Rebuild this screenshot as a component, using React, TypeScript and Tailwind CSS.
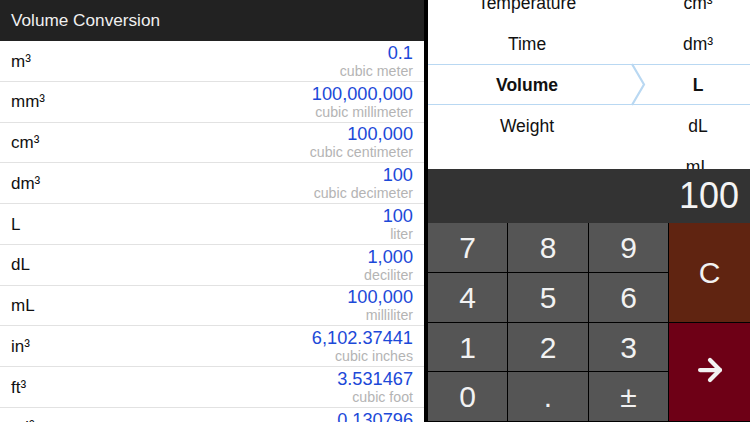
import { ArrowRight } from "lucide-react";

const rows = [
  { unit: "m³", value: "0.1", name: "cubic meter" },
  { unit: "mm³", value: "100,000,000", name: "cubic millimeter" },
  { unit: "cm³", value: "100,000", name: "cubic centimeter" },
  { unit: "dm³", value: "100", name: "cubic decimeter" },
  { unit: "L", value: "100", name: "liter" },
  { unit: "dL", value: "1,000", name: "deciliter" },
  { unit: "mL", value: "100,000", name: "milliliter" },
  { unit: "in³", value: "6,102.37441", name: "cubic inches" },
  { unit: "ft³", value: "3.531467", name: "cubic foot" },
  { unit: "yd³", value: "0.130796", name: "cubic yard" },
];

const categories = ["Temperature", "Time", "Volume", "Weight"];
const units = ["cm³", "dm³", "L", "dL", "mL"];
const keys = ["7", "8", "9", "4", "5", "6", "1", "2", "3", "0", ".", "±"];

export default function App() {
  return (
    <div className="flex h-[422px] w-[750px] overflow-hidden bg-black font-['Liberation_Sans',sans-serif]">
      {/* Conversion list */}
      <div className="w-[424px] shrink-0 bg-white">
        <div className="flex h-[41px] items-center bg-[#222222] pl-[11px] text-[17.2px] text-[#f0f0f0]">
          Volume Conversion
        </div>
        {rows.map((row) => (
          <div
            key={row.unit}
            className="flex h-[40.75px] items-center justify-between border-b border-[#e2e2e2] pl-[11px] pr-[11px]"
          >
            <span className="pt-px text-[17px] text-[#111111]">{row.unit}</span>
            <div className="flex flex-col items-end">
              <span className="text-[18.2px] leading-[21px] text-[#1c49d8]">{row.value}</span>
              <span className="text-[14.2px] leading-[15px] text-[#b4b4b4]">{row.name}</span>
            </div>
          </div>
        ))}
      </div>

      <div className="ml-1 flex flex-1 flex-col">
        {/* Picker */}
        <div className="relative flex h-[169px] overflow-hidden bg-white text-[17.5px] text-[#111111]">
          <div className="-mt-[17px] w-[198px] shrink-0">
            {categories.map((name) => (
              <div
                key={name}
                className={`flex h-[41px] items-center justify-center ${name === "Volume" ? "font-bold" : ""}`}
              >
                {name}
              </div>
            ))}
          </div>
          <div className="-mt-[17px] flex-1 pl-5">
            {units.map((name) => (
              <div
                key={name}
                className={`flex h-[41px] items-center justify-center ${name === "L" ? "font-bold" : ""}`}
              >
                {name}
              </div>
            ))}
          </div>
          {/* Selection band */}
          <svg className="absolute left-0 top-[63px] h-[43px] w-[322px]" viewBox="0 0 322 43" fill="none">
            <path d="M0 1.5H204M0 41.5H204M322 1.5H204M322 41.5H204" stroke="#b9d8f2" strokeWidth="1" />
            <path d="M204 1L216 21.5L204 42" stroke="#b9d8f2" strokeWidth="2.2" />
          </svg>
        </div>

        {/* Display */}
        <div className="flex h-[54px] items-center justify-end bg-[#333333] pr-[11px] text-[36px] text-[#f4f4f4]">
          100
        </div>

        {/* Keypad */}
        <div className="grid flex-1 grid-cols-[79px_80px_79px_1fr] grid-rows-[49px_49px_48px_49px] gap-px bg-black text-[#f2f2f2]">
          {keys.slice(0, 3).map((key) => (
            <div key={key} className="flex items-center justify-center bg-[#555555] text-[30px]">
              {key}
            </div>
          ))}
          <div className="row-span-2 flex items-center justify-center bg-[#602411] text-[30px]">C</div>
          {keys.slice(3, 6).map((key) => (
            <div key={key} className="flex items-center justify-center bg-[#555555] text-[30px]">
              {key}
            </div>
          ))}
          {keys.slice(6, 9).map((key) => (
            <div key={key} className="flex items-center justify-center bg-[#555555] text-[30px]">
              {key}
            </div>
          ))}
          <div className="row-span-2 flex items-center justify-center bg-[#6e0016] pb-1">
            <ArrowRight className="h-[34px] w-[34px]" strokeWidth={3} />
          </div>
          {keys.slice(9).map((key) => (
            <div key={key} className="flex items-center justify-center bg-[#555555] text-[30px]">
              {key}
            </div>
          ))}
        </div>
      </div>
    </div>
  );
}
